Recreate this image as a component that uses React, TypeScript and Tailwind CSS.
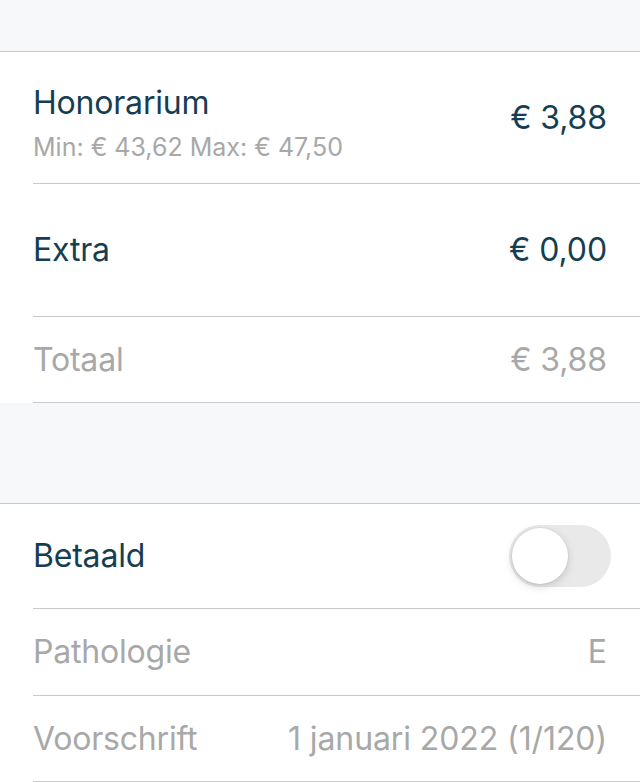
import React from 'react'

const font = { fontFamily: 'Inter, "Noto Sans", sans-serif' }

function Row({
  label,
  sub,
  value,
  muted,
  height,
  children,
}: {
  label: string
  sub?: string
  value?: string
  muted?: boolean
  height: string
  children?: React.ReactNode
}) {
  const color = muted ? 'text-[#a8a8a8]' : 'text-[#163e52]'
  return (
    <div className={`flex items-center justify-between border-b border-[#c9c9c9] pr-[33px] ${height}`}>
      <div className={`flex flex-col ${sub ? 'mt-[10px]' : ''}`}>
        <span className={`text-[32px] leading-[38px] tracking-[-0.2px] ${color}`}>{label}</span>
        {sub && <span className="mt-[10px] text-[25px] leading-[30px] text-[#a8a8a8]">{sub}</span>}
      </div>
      {value && <span className={`text-[32px] tracking-[-0.1px] ${color}`}>{value}</span>}
      {children}
    </div>
  )
}

function Toggle() {
  return (
    <div className="mr-[-4px] flex h-[62px] w-[102px] items-center rounded-full bg-[#e9e9ea] p-[3px]">
      <div className="h-[56px] w-[56px] rounded-full bg-white shadow-[0_3px_8px_rgba(0,0,0,0.15),0_0_0_1px_rgba(0,0,0,0.04)]" />
    </div>
  )
}

export default function App() {
  return (
    <div className="h-[782px] w-[640px] overflow-hidden bg-[#f7f8fa]" style={font}>
      <div className="h-[51px]" />
      <div className="border-t border-[#c9c9c9] bg-white pl-[33px]">
        <Row label="Honorarium" sub="Min: € 43,62 Max: € 47,50" value="€ 3,88" height="h-[132px]" />
        <Row label="Extra" value="€ 0,00" height="h-[133px]" />
        <Row label="Totaal" value="€ 3,88" muted height="h-[86px]" />
      </div>
      <div className="h-[100px]" />
      <div className="border-t border-[#c9c9c9] bg-white pl-[33px]">
        <Row label="Betaald" height="h-[105px]">
          <Toggle />
        </Row>
        <Row label="Pathologie" value="E" muted height="h-[87px]" />
        <Row label="Voorschrift" value="1 januari 2022 (1/120)" muted height="h-[86px]" />
      </div>
    </div>
  )
}
